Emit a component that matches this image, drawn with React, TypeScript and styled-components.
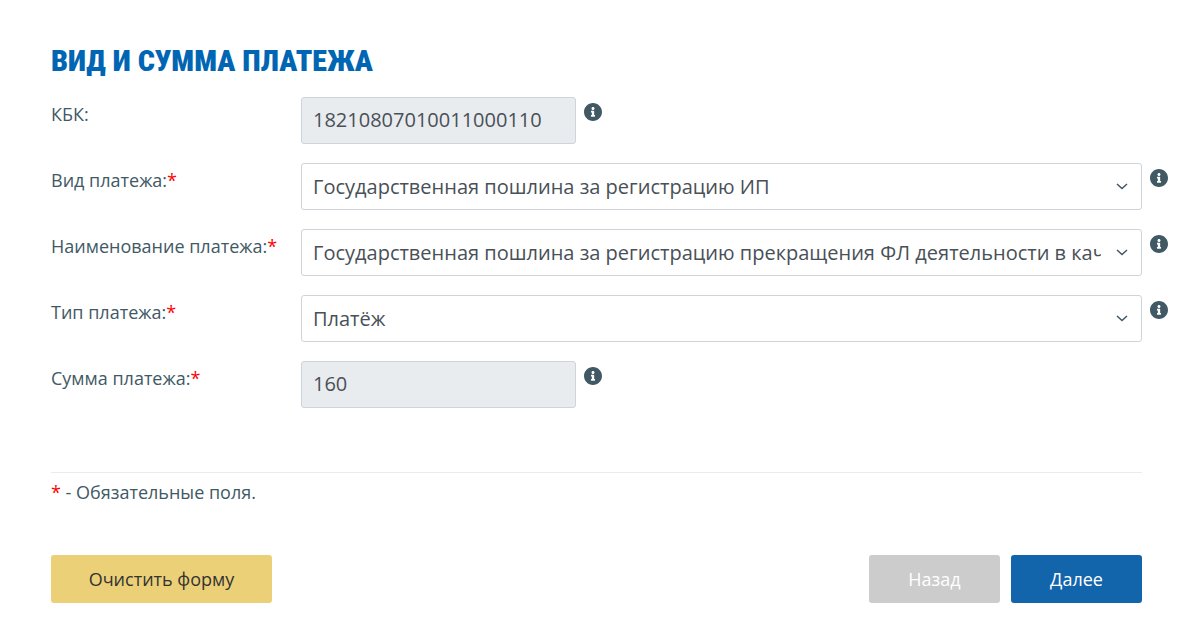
import React from "react";
import styled, { createGlobalStyle } from "styled-components";

const Global = createGlobalStyle`
  * { box-sizing: border-box; }
  body { margin: 0; background: #fff; color: #405965; font: 400 18px/26px "Open Sans", sans-serif; }
`;
const Page = styled.main`padding: 43px 48px 27px 51px;`;
const Title = styled.h1`
  margin: 0 0 18px; color: #0066b3; text-transform: uppercase;
  font: 900 30px/36px "Roboto Condensed", "Roboto", sans-serif;
`;
const Fields = styled.div`display: grid; gap: 19px;`;
const Row = styled.div`display: flex; align-items: flex-start; margin-right: -26px;`;
const Label = styled.label`flex: 0 0 250px; padding-top: 4px;`;
const Star = styled.span`color: #ff0000;`;
const TextBox = styled.input`
  width: 275px; height: 47px; padding: 0 11px 2px; border: 1px solid #ced4da; border-radius: 3px;
  background: #e9ecef; color: #495057; font: 20px "Open Sans", sans-serif;
`;
const SelectWrap = styled.div`flex: 1; min-width: 0; position: relative;`;
const Select = styled.select`
  display: block; width: 100%; height: 47px; padding: 0 40px 0 11px; appearance: none;
  border: 1px solid #ced4da; border-radius: 3px; background: #fff; color: #495057;
  font: 20px "Open Sans", sans-serif;
`;
const Chevron = styled.svg`position: absolute; right: 14px; top: 20px; pointer-events: none;`;
const InfoIcon = styled.svg`flex: none; margin: 6px 0 0 8px;`;
const Note = styled.p`margin: 64px 0 50px; padding-top: 6px; border-top: 1px solid #e9ecef;`;
const Actions = styled.div`display: flex; gap: 11px;`;
const Button = styled.button<{ $bg: string; $fg: string; $wide?: boolean }>`
  width: ${p => (p.$wide ? 221 : 131)}px; height: 48px; border: 0; border-radius: 3px;
  margin-right: ${p => (p.$wide ? "auto" : "0")};
  background: ${p => p.$bg}; color: ${p => p.$fg}; font: 400 18px "Open Sans", sans-serif;
`;

const Info = () => (
  <InfoIcon width="18" height="18" viewBox="8 8 496 496" role="img" aria-label="Подсказка">
    <path fill="#405965" d="M256 8C119 8 8 119 8 256s111 248 248 248 248-111 248-248S393 8 256 8zm0 110c23 0 42 19 42 42s-19 42-42 42-42-19-42-42 19-42 42-42zm56 254c0 7-5 12-12 12h-88c-7 0-12-5-12-12v-24c0-7 5-12 12-12h12v-64h-12c-7 0-12-5-12-12v-24c0-7 5-12 12-12h64c7 0 12 5 12 12v100h12c7 0 12 5 12 12v24z" />
  </InfoIcon>
);

type FieldProps = { id: string; label: string; value: string; required?: boolean };
const FieldLabel = ({ id, label, required }: FieldProps) => (
  <Label htmlFor={id}>{label}{required && <Star>*</Star>}</Label>
);
const TextField = (p: FieldProps) => (
  <Row><FieldLabel {...p} /><TextBox id={p.id} value={p.value} readOnly /><Info /></Row>
);
const SelectField = (p: FieldProps) => (
  <Row>
    <FieldLabel {...p} />
    <SelectWrap>
      <Select id={p.id}><option>{p.value}</option></Select>
      <Chevron width="12" height="8" viewBox="0 0 12 8" fill="none" stroke="#405965" strokeWidth="1.5"><path d="M1 1L6 5.600l5-4.600" /></Chevron>
    </SelectWrap>
    <Info />
  </Row>
);

export default function App() {
  return (
    <Page>
      <Global />
      <form onSubmit={e => e.preventDefault()}>
        <Title>Вид и сумма платежа</Title>
        <Fields>
          <TextField id="kbk" label="КБК:" value="18210807010011000110" />
          <SelectField id="kind" label="Вид платежа:" value="Государственная пошлина за регистрацию ИП" required />
          <SelectField id="name" label="Наименование платежа:" value="Государственная пошлина за регистрацию прекращения ФЛ деятельности в качестве ИП" required />
          <SelectField id="type" label="Тип платежа:" value="Платёж" required />
          <TextField id="sum" label="Сумма платежа:" value="160" required />
        </Fields>
        <Note><Star>*</Star> - Обязательные поля.</Note>
        <Actions>
          <Button type="reset" $bg="#ebd077" $fg="#333333" $wide>Очистить форму</Button>
          <Button type="button" $bg="#cccccc" $fg="#ffffff">Назад</Button>
          <Button type="submit" $bg="#1264ab" $fg="#ffffff">Далее</Button>
        </Actions>
      </form>
    </Page>
  );
}
